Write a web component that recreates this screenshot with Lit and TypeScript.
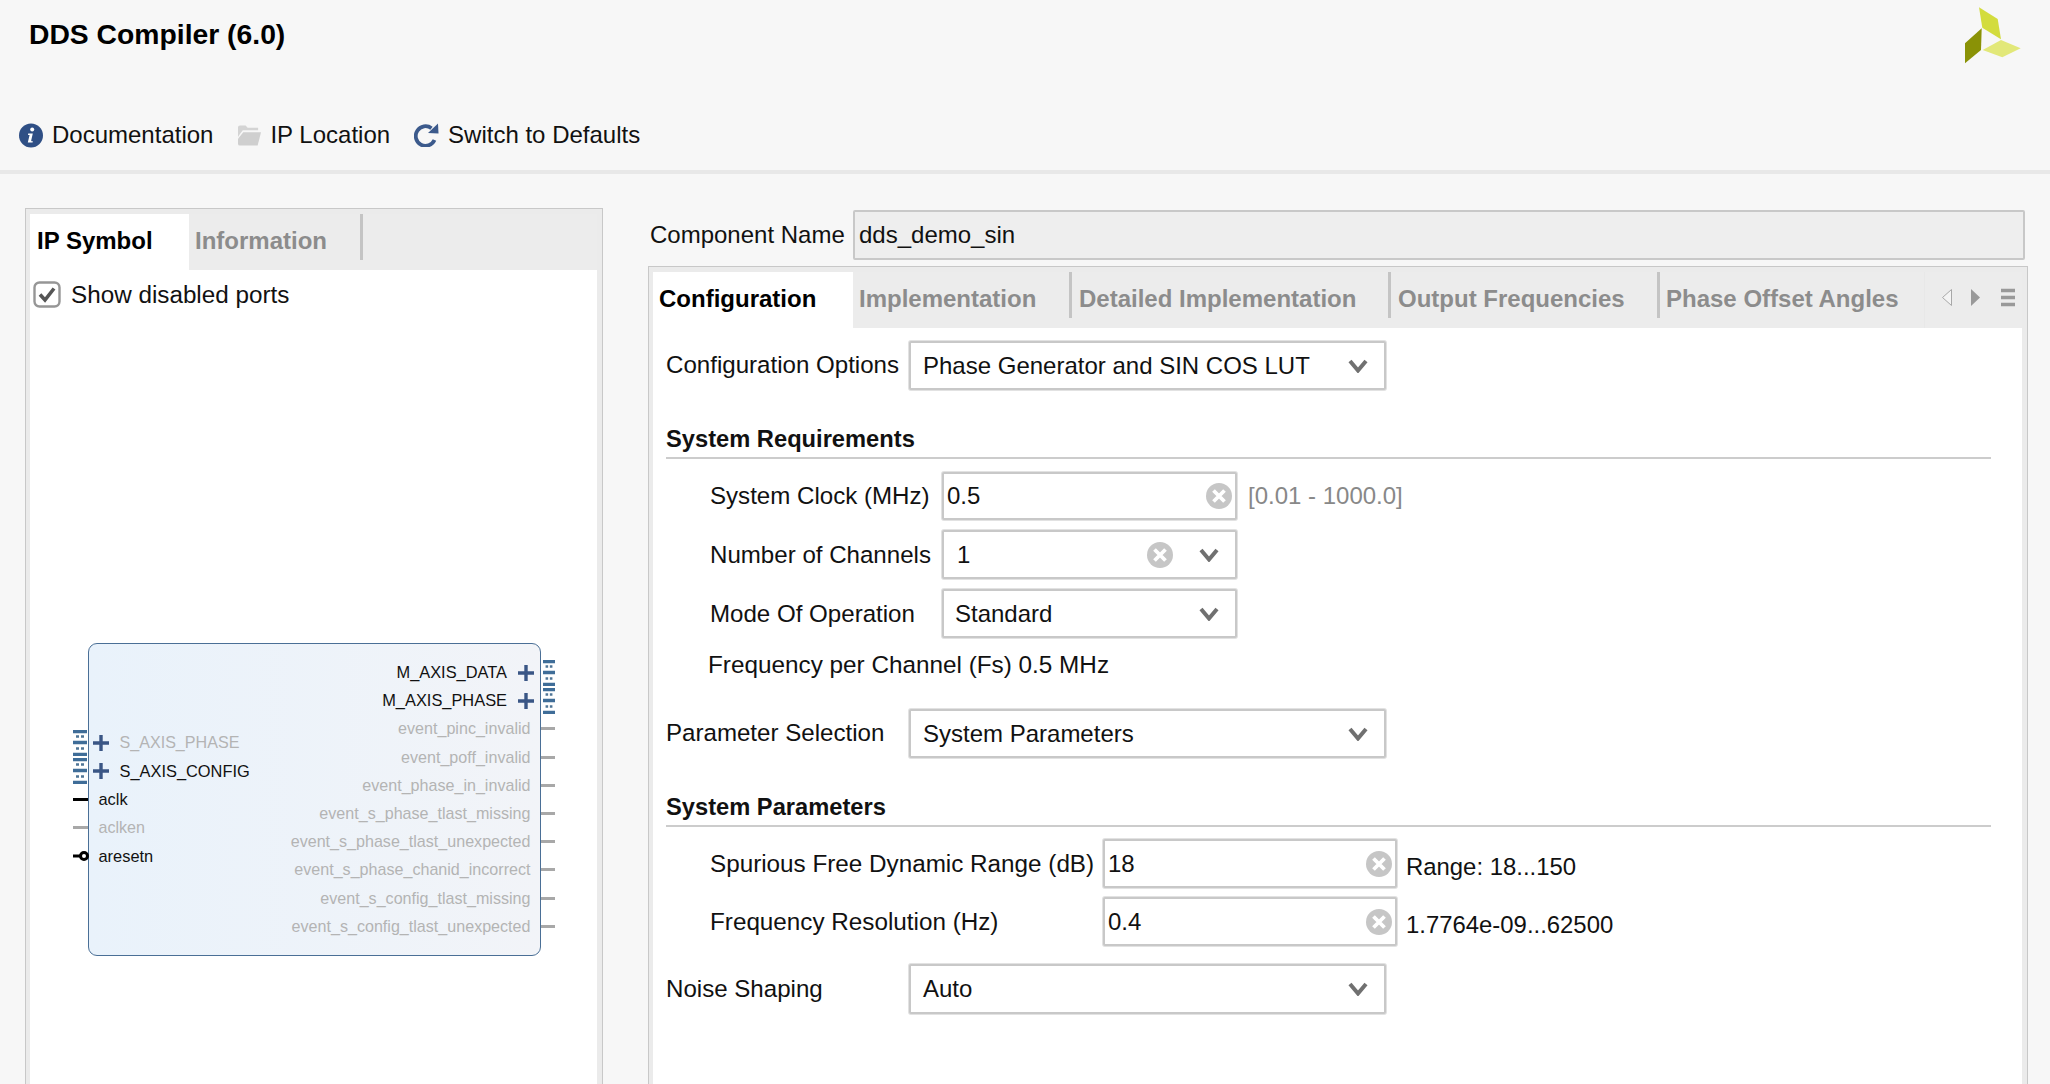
import { LitElement, css, html, svg } from "lit";
import { customElement } from "lit/decorators.js";

const chevron = html`<svg class="chevron" width="20" height="14" viewBox="0 0 20 14"><path d="M2 2 L10 11.5 L18 2" fill="none" stroke="#707070" stroke-width="4"/></svg>`;

const clear = html`<svg class="clear" width="26" height="26" viewBox="0 0 26 26"><circle cx="13" cy="13" r="13" fill="#c6c6c6"/><path d="M7.5 7.5 L18.5 18.5 M18.5 7.5 L7.5 18.5" stroke="#fff" stroke-width="3.8"/></svg>`;

const plus = html`<svg class="plus" width="16" height="16" viewBox="0 0 16 16"><path d="M0 8 H16 M8 0 V16" stroke="#3a5685" stroke-width="3.4"/></svg>`;

const bus = html`<svg class="bus" width="14" height="26" viewBox="0 0 14 26" preserveAspectRatio="none">
  <path d="M0 1.5 H14 M0 12.5 H14 M0 24.5 H14" stroke="#3f6d98" stroke-width="3.6"/>
  <path d="M3 6.5 H6 M8 6.5 H11 M3 18.5 H6 M8 18.5 H11" stroke="#4f7596" stroke-width="2.6"/>
</svg>`;

interface Port {
  name: string;
  off?: boolean;
  kind?: "bus" | "wire" | "reset";
}

const leftPorts: Port[] = [
  { name: "S_AXIS_PHASE", off: true, kind: "bus" },
  { name: "S_AXIS_CONFIG", kind: "bus" },
  { name: "aclk" },
  { name: "aclken", off: true },
  { name: "aresetn", kind: "reset" },
];

const rightPorts: Port[] = [
  { name: "M_AXIS_DATA", kind: "bus" },
  { name: "M_AXIS_PHASE", kind: "bus" },
  { name: "event_pinc_invalid", off: true },
  { name: "event_poff_invalid", off: true },
  { name: "event_phase_in_invalid", off: true },
  { name: "event_s_phase_tlast_missing", off: true },
  { name: "event_s_phase_tlast_unexpected", off: true },
  { name: "event_s_phase_chanid_incorrect", off: true },
  { name: "event_s_config_tlast_missing", off: true },
  { name: "event_s_config_tlast_unexpected", off: true },
];

const mainTabs = [
  { name: "Implementation", width: 216, pad: 6 },
  { name: "Detailed Implementation", width: 316, pad: 7 },
  { name: "Output Frequencies", width: 266, pad: 7 },
  { name: "Phase Offset Angles", width: 260, pad: 6 },
];

@customElement("app-root")
export class AppRoot extends LitElement {
  private leftPort(p: Port) {
    const cls = p.off ? "port off" : "port";
    if (p.kind === "bus") {
      return html`<div class=${cls}>${bus}<span class="gap-plus-l">${plus}</span><span>${p.name}</span></div>`;
    }
    if (p.kind === "reset") {
      return html`<div class=${cls}>
        <svg class="stub-svg" width="18" height="12" viewBox="0 0 18 12"><path d="M0 6 H8" stroke="#000" stroke-width="3"/><circle cx="11" cy="6" r="3.5" fill="#fff" stroke="#000" stroke-width="3"/></svg>
        <span class="pname-reset">${p.name}</span>
      </div>`;
    }
    return html`<div class=${cls}><span class="stub"></span><span class="pname-wire">${p.name}</span></div>`;
  }

  private rightPort(p: Port) {
    const cls = p.off ? "port off" : "port";
    if (p.kind === "bus") {
      return html`<div class=${cls}><span>${p.name}</span><span class="gap-plus-r">${plus}</span>${bus}</div>`;
    }
    return html`<div class=${cls}><span>${p.name}</span><span class="stub right"></span></div>`;
  }

  render() {
    return html`
      <header>
        <div class="title-row">
          <h1>DDS Compiler (6.0)</h1>
          <svg class="logo" width="56" height="57" viewBox="0 0 56 57">
            ${svg`<polygon points="14,0.3 32.7,12 36,32.3 17.3,20.7" fill="#d3dc3e"/>
            <polygon points="16.7,21.3 16,43 0,56.3 0,36.3" fill="#8a9206"/>
            <polygon points="36,33 55.7,41.3 37.3,50.3 17.7,43" fill="#e2e879"/>`}
          </svg>
        </div>
        <div class="toolbar">
          <div class="tool">
            <svg width="24" height="25" viewBox="0 0 24 25">
              <circle cx="12" cy="12.5" r="12" fill="#2f4f85"/>
              <circle cx="13.2" cy="6.6" r="2" fill="#fff"/>
              <path d="M9.2 10.6 H13.8 L12.2 17.6 Q12 18.6 13.8 18 L13.6 19.6 H8.8 L10.6 12 H9 Z" fill="#fff"/>
            </svg>
            <span>Documentation</span>
          </div>
          <div class="tool">
            <svg width="23" height="21" viewBox="0 0 24 21">
              <path d="M0 2 Q0 0 2 0 H8 L10 2.5 H21 V5 H5 L2 9 L0 12 Z" fill="#d4d4d4"/>
              <path d="M5.5 7 H24 L20.5 21 H2 Q0 21 0 19 V14 Z" fill="#cfcfcf"/>
            </svg>
            <span>IP Location</span>
          </div>
          <div class="tool">
            <svg width="25" height="24" viewBox="0 0 25 24">
              <path d="M20.5 17 A9.8 9.8 0 1 1 17.5 5.2" fill="none" stroke="#3c5a8c" stroke-width="3.8"/>
              <path d="M14 10 L24.5 10.5 L24 0.5 Z" fill="#3c5a8c"/>
            </svg>
            <span>Switch to Defaults</span>
          </div>
        </div>
      </header>

      <main>
        <section class="panel left-panel">
          <div class="tabbar">
            <div class="tab active first" style="width:159px">IP Symbol</div>
            <div class="tab" style="width:171px">Information</div>
            <span class="sep"></span>
          </div>
          <div class="left-body">
            <label class="check">
              <svg width="28" height="27" viewBox="0 0 28 27">
                <rect x="1.5" y="1.5" width="25" height="24" rx="5" fill="#fff" stroke="#969696" stroke-width="2.4"/>
                <path d="M7 13.5 L12 19 L21 7.5" fill="none" stroke="#555" stroke-width="3.6"/>
              </svg>
              <span>Show disabled ports</span>
            </label>
            <div class="symbol">
              <div class="ports ports-left">${leftPorts.map((p) => this.leftPort(p))}</div>
              <div class="ports ports-right">${rightPorts.map((p) => this.rightPort(p))}</div>
            </div>
          </div>
        </section>

        <section class="right-col">
          <div class="name-row">
            <span class="name-label">Component Name</span>
            <div class="name-field">dds_demo_sin</div>
          </div>
          <div class="panel right-panel">
            <div class="tabbar">
              <div class="tab active" style="width:200px">Configuration</div>
              ${mainTabs.map(
                (t, i) => html`
                  <div class="tab" style="width:${t.width}px;padding-left:${t.pad}px">${t.name}</div>
                  ${i < 3 ? html`<span class="sep"></span>` : ""}
                `
              )}
              <svg class="tab-tools" width="98" height="56" viewBox="0 0 98 56">
                <path d="M0.5 0 V56" stroke="#e8e8e8"/>
                <path d="M27.5 17.5 L18.5 25.5 L27.5 33.5 Z" fill="#f4f4f4" stroke="#a8a8a8"/>
                <path d="M47 17 L56 25.5 L47 34 Z" fill="#999"/>
                <path d="M77 18.5 H91 M77 25.5 H91 M77 32.5 H91" stroke="#999" stroke-width="3.6"/>
              </svg>
            </div>
            <div class="form">
              <div class="row r-options">
                <span class="label top">Configuration Options</span>
                <div class="field wide">Phase Generator and SIN COS LUT<span class="grow"></span>${chevron}</div>
              </div>

              <h2 class="group g-req">System Requirements</h2>

              <div class="row nested r-clock">
                <span class="label sub">System Clock (MHz)</span>
                <div class="field narrow tight">0.5<span class="grow"></span>${clear}</div>
                <span class="hint gray">[0.01 - 1000.0]</span>
              </div>
              <div class="row nested r-next">
                <span class="label sub">Number of Channels</span>
                <div class="field narrow num">1<span class="grow"></span>${clear}<span class="clear-gap"></span>${chevron}</div>
              </div>
              <div class="row nested r-next">
                <span class="label sub">Mode Of Operation</span>
                <div class="field narrow">Standard<span class="grow"></span>${chevron}</div>
              </div>
              <div class="fs-line">Frequency per Channel (Fs) 0.5 MHz</div>

              <div class="row r-param">
                <span class="label top">Parameter Selection</span>
                <div class="field wide">System Parameters<span class="grow"></span>${chevron}</div>
              </div>

              <h2 class="group g-par">System Parameters</h2>

              <div class="row nested r-sfdr">
                <span class="label sub2">Spurious Free Dynamic Range (dB)</span>
                <div class="field mid tight">18<span class="grow"></span>${clear}</div>
                <span class="hint low">Range: 18...150</span>
              </div>
              <div class="row nested r-res">
                <span class="label sub2">Frequency Resolution (Hz)</span>
                <div class="field mid tight">0.4<span class="grow"></span>${clear}</div>
                <span class="hint low">1.7764e-09...62500</span>
              </div>
              <div class="row r-noise">
                <span class="label top">Noise Shaping</span>
                <div class="field wide">Auto<span class="grow"></span>${chevron}</div>
              </div>
            </div>
          </div>
        </section>
      </main>
    `;
  }

  static styles = css`
    :host {
      display: block;
      height: 100vh;
      overflow: hidden;
      background: #f7f7f7;
      font-family: "Liberation Sans", Arial, sans-serif;
      font-size: 24px;
      color: #111;
    }

    header {
      height: 170px;
      border-bottom: 4px solid #e8e8e8;
    }

    .title-row {
      display: flex;
      justify-content: space-between;
      align-items: flex-start;
      height: 70px;
      padding: 0 29px;
    }

    h1 {
      margin: 0;
      font-size: 28.3px;
      line-height: 68px;
      font-weight: 700;
      color: #000;
    }

    .logo {
      margin-top: 7px;
    }

    .toolbar {
      display: flex;
      gap: 24px;
      align-items: center;
      height: 38px;
      margin-top: 46px;
      padding-left: 19px;
    }

    .tool {
      display: flex;
      align-items: center;
      gap: 9px;
    }

    .tool:first-child {
      margin-right: 1px;
    }

    main {
      display: flex;
      align-items: flex-start;
      padding: 34px 0 0 25px;
    }

    .panel {
      display: flex;
      flex-direction: column;
      box-sizing: border-box;
      border: 1px solid #c8c8c8;
      border-bottom: none;
      background: #ebebeb;
      padding: 5px 5px 0 4px;
    }

    .left-panel {
      width: 578px;
      height: 880px;
    }

    .tabbar {
      display: flex;
      align-items: flex-start;
      flex: none;
      height: 56px;
      background: #ececec;
    }

    .tab {
      flex: none;
      box-sizing: border-box;
      height: 56px;
      padding-left: 6px;
      line-height: 54px;
      font-weight: 700;
      color: #8c8c8c;
      white-space: nowrap;
    }

    .tab.active {
      background: #fff;
      color: #000;
    }

    .tab.first {
      padding-left: 7px;
    }

    .sep {
      flex: none;
      width: 3px;
      height: 46px;
      background: #c4c4c4;
    }

    .left-body {
      flex: 1;
      background: #fff;
      padding: 11px 0 0 3px;
    }

    .check {
      display: flex;
      align-items: center;
      gap: 10px;
      height: 27px;
      font-size: 24.25px;
    }

    .symbol {
      position: relative;
      box-sizing: border-box;
      width: 453px;
      height: 313px;
      margin: 335px 0 0 55px;
      border: 1.5px solid #4a6f96;
      border-radius: 9px;
      background: linear-gradient(90deg, #e9f2fb, #f2f4f8);
    }

    .ports {
      position: absolute;
      display: flex;
      flex-direction: column;
      font-size: 16.4px;
      color: #111;
    }

    .ports-left {
      left: -16.5px;
      top: 84.5px;
      align-items: flex-start;
    }

    .ports-right {
      right: -14.5px;
      top: 14.5px;
      align-items: flex-end;
    }

    .port {
      display: flex;
      align-items: center;
      height: 28.4px;
      white-space: nowrap;
    }

    .ports-right .port {
      height: 28.2px;
    }

    .port.off {
      color: #b4b4b4;
      font-size: 16.1px;
    }

    .port svg {
      display: block;
    }

    .ports-right .bus {
      width: 12px;
    }

    .stub {
      width: 15px;
      height: 3px;
      background: #000;
    }

    .off .stub {
      background: #a8a8a8;
    }

    .stub.right {
      width: 14px;
      margin-left: 10px;
    }

    .gap-plus-l {
      margin: 0 11px 0 6px;
    }

    .gap-plus-r {
      margin: 0 8.5px 0 11px;
    }

    .pname-wire {
      margin-left: 11px;
    }

    .pname-reset {
      margin-left: 8px;
    }

    .right-col {
      display: flex;
      flex-direction: column;
      width: 1380px;
      margin-left: 45px;
    }

    .name-row {
      display: flex;
      align-items: center;
      height: 50px;
      margin-top: 2px;
      margin-left: 2px;
    }

    .name-label {
      width: 203px;
      flex: none;
    }

    .name-field {
      box-sizing: border-box;
      width: 1172px;
      height: 50px;
      padding-left: 4px;
      line-height: 46px;
      border: 2px solid #c8c8c8;
      border-radius: 2px;
      background: #eee;
    }

    .right-panel {
      height: 818px;
      margin-top: 6px;
      padding-right: 5px;
    }

    .tab-tools {
      flex: none;
      margin-left: auto;
    }

    .form {
      flex: 1;
      background: #fff;
      padding: 13px 13px 0;
    }

    .row {
      display: flex;
      align-items: center;
      height: 49px;
    }

    .nested {
      padding-left: 44px;
    }

    .label {
      flex: none;
      white-space: nowrap;
      font-size: 24.1px;
    }

    .label.top {
      width: 243px;
      margin-top: -1px;
    }

    .label.sub {
      width: 232px;
    }

    .label.sub2 {
      width: 393px;
      font-size: 24.25px;
    }

    .field {
      display: flex;
      align-items: center;
      flex: none;
      box-sizing: border-box;
      height: 100%;
      padding: 0 16px 0 12px;
      border: 2px solid #c8c8c8;
      border-radius: 2px;
      background: #fff;
      box-shadow: 0 0 0 1px #e2e2e2;
    }

    .field svg {
      flex: none;
    }

    .wide {
      width: 477px;
    }

    .narrow {
      width: 295px;
      padding-left: 11px;
    }

    .narrow.num {
      padding-left: 13px;
    }

    .mid {
      width: 294px;
    }

    .tight,
    .narrow.tight {
      padding: 0 3px;
    }

    .grow {
      flex: 1;
    }

    .clear-gap {
      width: 26px;
    }

    .hint {
      margin-left: 11px;
    }

    .hint.gray {
      color: #888;
    }

    .hint.low {
      margin-left: 9px;
      margin-top: 6px;
      font-size: 23.9px;
    }

    .group {
      margin: 0;
      box-sizing: border-box;
      height: 37px;
      padding-bottom: 1px;
      line-height: 34px;
      font-size: 23.7px;
      font-weight: 700;
      color: #111;
      border-bottom: 2px solid #ccc;
      width: 1325px;
    }

    .g-req {
      margin-top: 32px;
    }

    .g-par {
      margin-top: 32px;
    }

    .r-clock {
      margin-top: 13px;
      height: 48px;
    }

    .r-next {
      margin-top: 10px;
    }

    .fs-line {
      height: 30px;
      line-height: 30px;
      margin-top: 12px;
      margin-bottom: -1px;
      padding-left: 42px;
      font-size: 24.3px;
    }

    .r-param {
      margin-top: 30px;
    }

    .r-sfdr {
      margin-top: 12px;
    }

    .r-res {
      margin-top: 9px;
    }

    .r-noise {
      margin-top: 18px;
      height: 50px;
    }
  `;
}
